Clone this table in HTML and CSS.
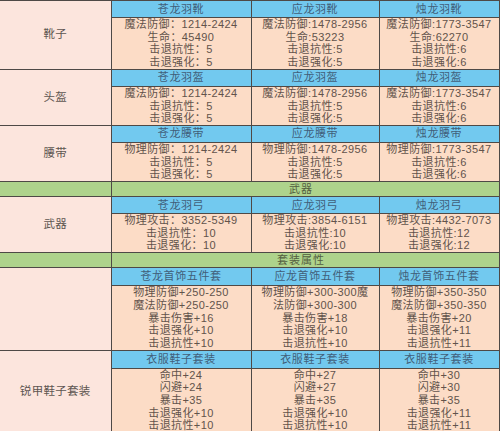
FILE: index.html
```html
<!DOCTYPE html>
<html lang="zh">
<head>
<meta charset="utf-8">
<title>装备属性</title>
<link rel="stylesheet" href="styles.css">
</head>
<body>
<table class="gear">
  <colgroup>
    <col class="c-label">
    <col class="c-1">
    <col class="c-2">
    <col class="c-3">
  </colgroup>
  <tbody>
    <tr class="head">
      <td class="label" rowspan="2">靴子</td>
      <td>苍龙羽靴</td><td>应龙羽靴</td><td>烛龙羽靴</td>
    </tr>
    <tr class="stats">
      <td>魔法防御：1214-2424<br>生命：45490<br>击退抗性：5<br>击退强化：5</td>
      <td>魔法防御:1478-2956<br>生命:53223<br>击退抗性:5<br>击退强化:5</td>
      <td>魔法防御:1773-3547<br>生命:62270<br>击退抗性:6<br>击退强化:6</td>
    </tr>

    <tr class="head">
      <td class="label" rowspan="2">头盔</td>
      <td>苍龙羽盔</td><td>应龙羽盔</td><td>烛龙羽盔</td>
    </tr>
    <tr class="stats">
      <td>魔法防御：1214-2424<br>击退抗性：5<br>击退强化：5</td>
      <td>魔法防御:1478-2956<br>击退抗性:5<br>击退强化:5</td>
      <td>魔法防御:1773-3547<br>击退抗性:6<br>击退强化:6</td>
    </tr>

    <tr class="head">
      <td class="label" rowspan="2">腰带</td>
      <td>苍龙腰带</td><td>应龙腰带</td><td>烛龙腰带</td>
    </tr>
    <tr class="stats">
      <td>物理防御：1214-2424<br>击退抗性：5<br>击退强化：5</td>
      <td>物理防御:1478-2956<br>击退抗性:5<br>击退强化:5</td>
      <td>物理防御:1773-3547<br>击退抗性:6<br>击退强化:6</td>
    </tr>

    <tr class="section">
      <td></td>
      <td colspan="3">武器</td>
    </tr>

    <tr class="head">
      <td class="label" rowspan="2">武器</td>
      <td>苍龙羽弓</td><td>应龙羽弓</td><td>烛龙羽弓</td>
    </tr>
    <tr class="stats">
      <td>物理攻击：3352-5349<br>击退抗性：10<br>击退强化：10</td>
      <td>物理攻击:3854-6151<br>击退抗性:10<br>击退强化:10</td>
      <td>物理攻击:4432-7073<br>击退抗性:12<br>击退强化:12</td>
    </tr>

    <tr class="section">
      <td></td>
      <td colspan="3">套装属性</td>
    </tr>

    <tr class="head tall">
      <td class="label" rowspan="2"></td>
      <td>苍龙首饰五件套</td><td>应龙首饰五件套</td><td>烛龙首饰五件套</td>
    </tr>
    <tr class="stats">
      <td>物理防御+250-250<br>魔法防御+250-250<br>暴击伤害+16<br>击退强化+10<br>击退抗性+10</td>
      <td>物理防御+300-300魔<br>法防御+300-300<br>暴击伤害+18<br>击退强化+10<br>击退抗性+10</td>
      <td>物理防御+350-350<br>魔法防御+350-350<br>暴击伤害+20<br>击退强化+11<br>击退抗性+11</td>
    </tr>

    <tr class="head tall">
      <td class="label" rowspan="2">锐甲鞋子套装</td>
      <td>衣服鞋子套装</td><td>衣服鞋子套装</td><td>衣服鞋子套装</td>
    </tr>
    <tr class="stats">
      <td>命中+24<br>闪避+24<br>暴击+35<br>击退强化+10<br>击退抗性+10</td>
      <td>命中+27<br>闪避+27<br>暴击+35<br>击退强化+10<br>击退抗性+10</td>
      <td>命中+30<br>闪避+30<br>暴击+35<br>击退强化+11<br>击退抗性+11</td>
    </tr>
  </tbody>
</table>
</body>
</html>
```

FILE: styles.css
```css
html, body {
  margin: 0;
  padding: 0;
  background: #fbe4dc;
}

body {
  width: 500px;
  height: 431px;
  overflow: hidden;
  font-family: "Liberation Sans", "Noto Sans CJK SC", sans-serif;
}

.gear {
  width: 499px;
  table-layout: fixed;
  border-collapse: collapse;
  border-top: 1px solid #4e4946;
  border-right: 1px solid #4e4946;
}

.c-label { width: 111px; }
.c-1 { width: 140px; }
.c-2 { width: 128px; }
.c-3 { width: 120px; }

.gear td {
  border: 1px solid #4e4946;
  padding: 0;
  text-align: center;
  vertical-align: middle;
  white-space: nowrap;
  overflow: hidden;
}

.gear td.label {
  border-left: none;
  background: #fce5dd;
  color: #5e5651;
  font-size: 11.5px;
  letter-spacing: 0.3px;
}

.head td {
  height: 16px;
  line-height: 15px;
  background: #72c9ef;
  color: #415f7a;
  font-size: 11px;
  letter-spacing: 0.6px;
}

.head.tall td {
  height: 17px;
}

.stats td {
  background: #fcdcc6;
  color: #62534b;
  font-size: 11px;
  line-height: 12.7px;
  letter-spacing: 0.4px;
  vertical-align: top;
}

.section td {
  height: 14px;
  line-height: 13px;
  background: #aed38c;
  color: #545e40;
  font-size: 11px;
  letter-spacing: 1px;
  padding-right: 8px;
}

.section td:first-child {
  border-left: none;
  padding-right: 0;
}
```
